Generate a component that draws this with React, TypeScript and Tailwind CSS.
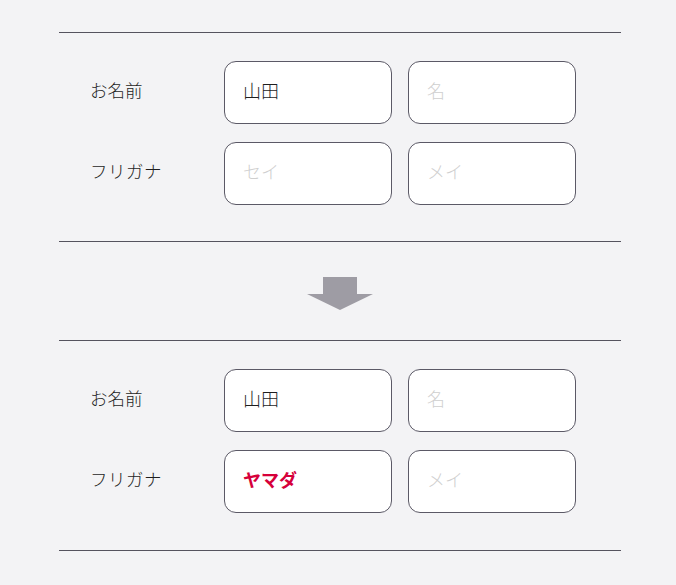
import React from "react";

const font = { fontFamily: '"Noto Sans CJK JP", "Noto Sans", sans-serif' };

interface FieldProps {
  value?: string;
  placeholder: string;
  highlight?: boolean;
}

const Field: React.FC<FieldProps> = ({ value, placeholder, highlight }) => (
  <input
    readOnly
    value={value ?? ""}
    placeholder={placeholder}
    style={font}
    className={`box-border h-[63px] w-[168px] rounded-[12px] border border-[#5b5966] bg-white pb-[5px] pl-[18px] text-[18px] outline-none placeholder:font-light placeholder:text-[#cfcfcf] ${
      highlight ? "font-bold text-[#d6003a]" : "font-light text-[#1e1e1e]"
    }`}
  />
);

interface SectionProps {
  furigana?: string;
  last?: boolean;
}

const NameSection: React.FC<SectionProps> = ({ furigana, last }) => (
  <div
    className={`flex flex-col gap-[18px] border-y border-[#55535e] pt-[28px] pl-[31px] ${
      last ? "pb-[37px]" : "pb-[36px]"
    }`}
  >
    <div className="flex items-center">
      <div className="w-[134px] pb-[5px] text-[17.5px] font-light text-[#1e1e1e]">お名前</div>
      <div className="flex gap-[16px]">
        <Field value="山田" placeholder="姓" />
        <Field placeholder="名" />
      </div>
    </div>
    <div className="flex items-center">
      <div className="w-[134px] pb-[5px] text-[17.5px] font-light tracking-[0.5px] text-[#1e1e1e]">
        フリガナ
      </div>
      <div className="flex gap-[16px]">
        <Field value={furigana} placeholder="セイ" highlight={!!furigana} />
        <Field placeholder="メイ" />
      </div>
    </div>
  </div>
);

export default function App() {
  return (
    <div className="min-h-[585px] bg-[#f3f3f5] pt-[32px]" style={font}>
      <div className="ml-[59px] w-[562px]">
        <NameSection />
        <div className="flex justify-center pt-[35px] pb-[30px]">
          <svg width="66" height="33" viewBox="0 0 66 33">
            <polygon points="16,0 50,0 50,17 66,17 33,33 0,17 16,17" fill="#9e9ca4" />
          </svg>
        </div>
        <NameSection furigana="ヤマダ" last />
      </div>
    </div>
  );
}
